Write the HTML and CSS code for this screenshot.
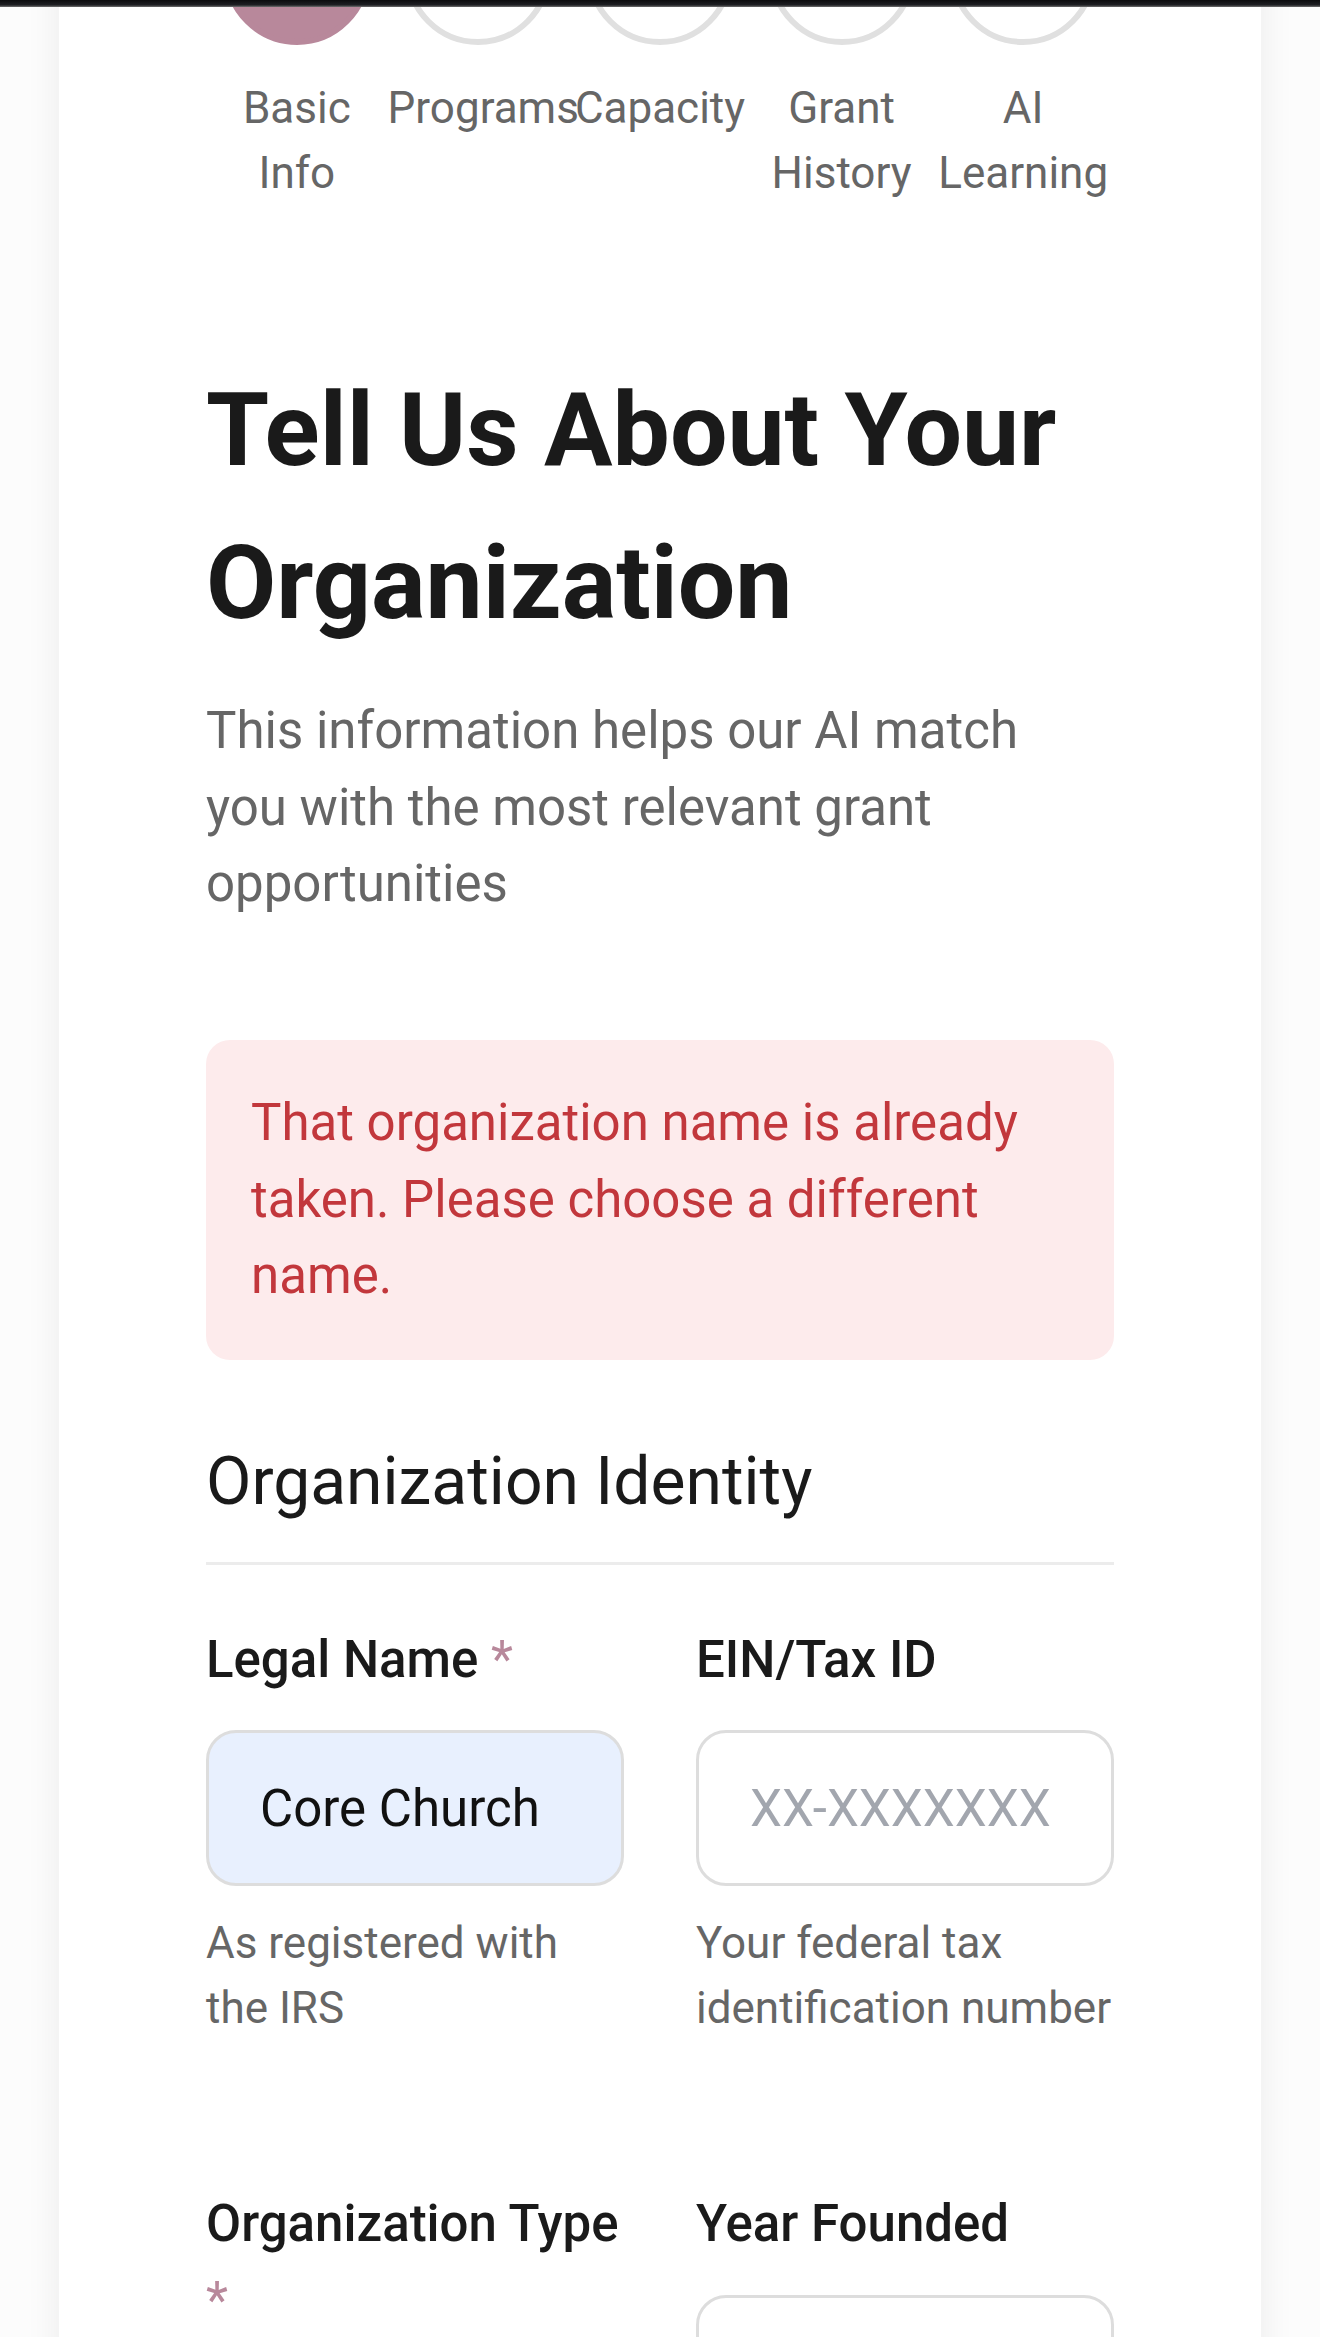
FILE: index.html
```html
<!DOCTYPE html>
<html lang="en">
<head>
<meta charset="utf-8">
<title>Tell Us About Your Organization</title>
<link rel="stylesheet" href="styles.css">
</head>
<body>
<div class="topbar"></div>
<main class="card">
  <ol class="stepper">
    <li class="step active"><span class="step-dot"></span><span class="step-label">Basic Info</span></li>
    <li class="step"><span class="step-dot"></span><span class="step-label">Programs</span></li>
    <li class="step"><span class="step-dot"></span><span class="step-label">Capacity</span></li>
    <li class="step"><span class="step-dot"></span><span class="step-label">Grant History</span></li>
    <li class="step"><span class="step-dot"></span><span class="step-label">AI Learning</span></li>
  </ol>

  <h1 class="title">Tell Us About Your Organization</h1>
  <p class="subtitle">This information helps our AI match you with the most relevant grant opportunities</p>

  <div class="alert">That organization name is already taken. Please choose a different name.</div>

  <section class="section">
    <h2 class="section-title">Organization Identity</h2>
    <div class="form-grid">
      <div class="field">
        <label class="field-label" for="legal">Legal Name <span class="req">*</span></label>
        <input id="legal" class="input filled" type="text" value="Core Church">
        <p class="help">As registered with the IRS</p>
      </div>
      <div class="field">
        <label class="field-label" for="ein">EIN/Tax ID</label>
        <input id="ein" class="input" type="text" placeholder="XX-XXXXXXX">
        <p class="help">Your federal tax identification number</p>
      </div>
      <div class="field">
        <label class="field-label" for="type">Organization Type <span class="req">*</span></label>
        <select id="type" class="input select">
          <option>Select type</option>
        </select>
      </div>
      <div class="field">
        <label class="field-label" for="year">Year Founded</label>
        <input id="year" class="input" type="text">
      </div>
    </div>
  </section>
</main>
</body>
</html>
```

FILE: styles.css
```css
html, body {
  height: 100%;
  overflow: hidden;
}

body {
  margin: 0;
  background: #fcfcfc;
  font-family: Roboto, "Liberation Sans", Arial, sans-serif;
  font-size: 51px;
  line-height: 76.5px;
  color: #1a1a1a;
}

.topbar {
  position: fixed;
  top: 0;
  left: 0;
  right: 0;
  height: 7px;
  background: linear-gradient(#0b0b0d, #1e1f23 70%, #707070);
  z-index: 10;
}

.card {
  display: block;
  background: #ffffff;
  margin: -150px 59px 0;
  padding: 45px 147px 120px;
  box-shadow: 0 0 34px rgba(0, 0, 0, 0.07);
}

/* Stepper */
.stepper {
  list-style: none;
  margin: 0 0 148px;
  padding: 0;
  display: flex;
}

.step {
  flex: 1 1 0;
  min-width: 0;
  display: flex;
  flex-direction: column;
  align-items: center;
}

.step-dot {
  display: block;
  width: 146px;
  height: 146px;
  box-sizing: border-box;
  border-radius: 50%;
  border: 6px solid #e0e0e0;
  background: #ffffff;
  margin-top: 4px;
}

.step.active .step-dot {
  background: #b8889b;
  border-color: #b8889b;
}

.step-label {
  align-self: stretch;
  margin-top: 31px;
  text-align: center;
  font-size: 44px;
  line-height: 65px;
  color: #666666;
}

/* Heading */
.title {
  margin: 0 0 33px;
  font-size: 102px;
  line-height: 153px;
  font-weight: 700;
  color: #1a1a1a;
}

.subtitle {
  margin: 0 0 117.5px;
  max-width: 870px;
  font-size: 51px;
  line-height: 76.5px;
  color: #666666;
}

.alert {
  background: #fdebec;
  color: #c2373c;
  padding: 45px;
  border-radius: 24px;
  margin-bottom: 73px;
}

/* Section */
.section-title {
  margin: 0 0 57px;
  padding-bottom: 32px;
  border-bottom: 3px solid #ececec;
  font-size: 66px;
  line-height: 97px;
  font-weight: 400;
  color: #1a1a1a;
}

.form-grid {
  display: grid;
  grid-template-columns: 1fr 1fr;
  column-gap: 72px;
  row-gap: 145px;
  align-items: start;
}

.field-label {
  display: block;
  margin-bottom: 32px;
  font-weight: 500;
  color: #1a1a1a;
}

.req {
  color: #b8889b;
  font-weight: 400;
}

.input {
  display: block;
  box-sizing: border-box;
  width: 100%;
  height: 156px;
  margin: 0;
  padding: 0 48px 0 51px;
  border: 3px solid #dddddd;
  border-radius: 30px;
  background: #ffffff;
  font-family: inherit;
  font-size: 51px;
  color: #111111;
  outline: none;
}

.input.filled {
  background: #e8f0fe;
}

.input::placeholder {
  color: #a2a6ae;
}

.select {
  appearance: none;
}

.help {
  margin: 25px 0 0;
  font-size: 44px;
  line-height: 65px;
  color: #666666;
}
```
